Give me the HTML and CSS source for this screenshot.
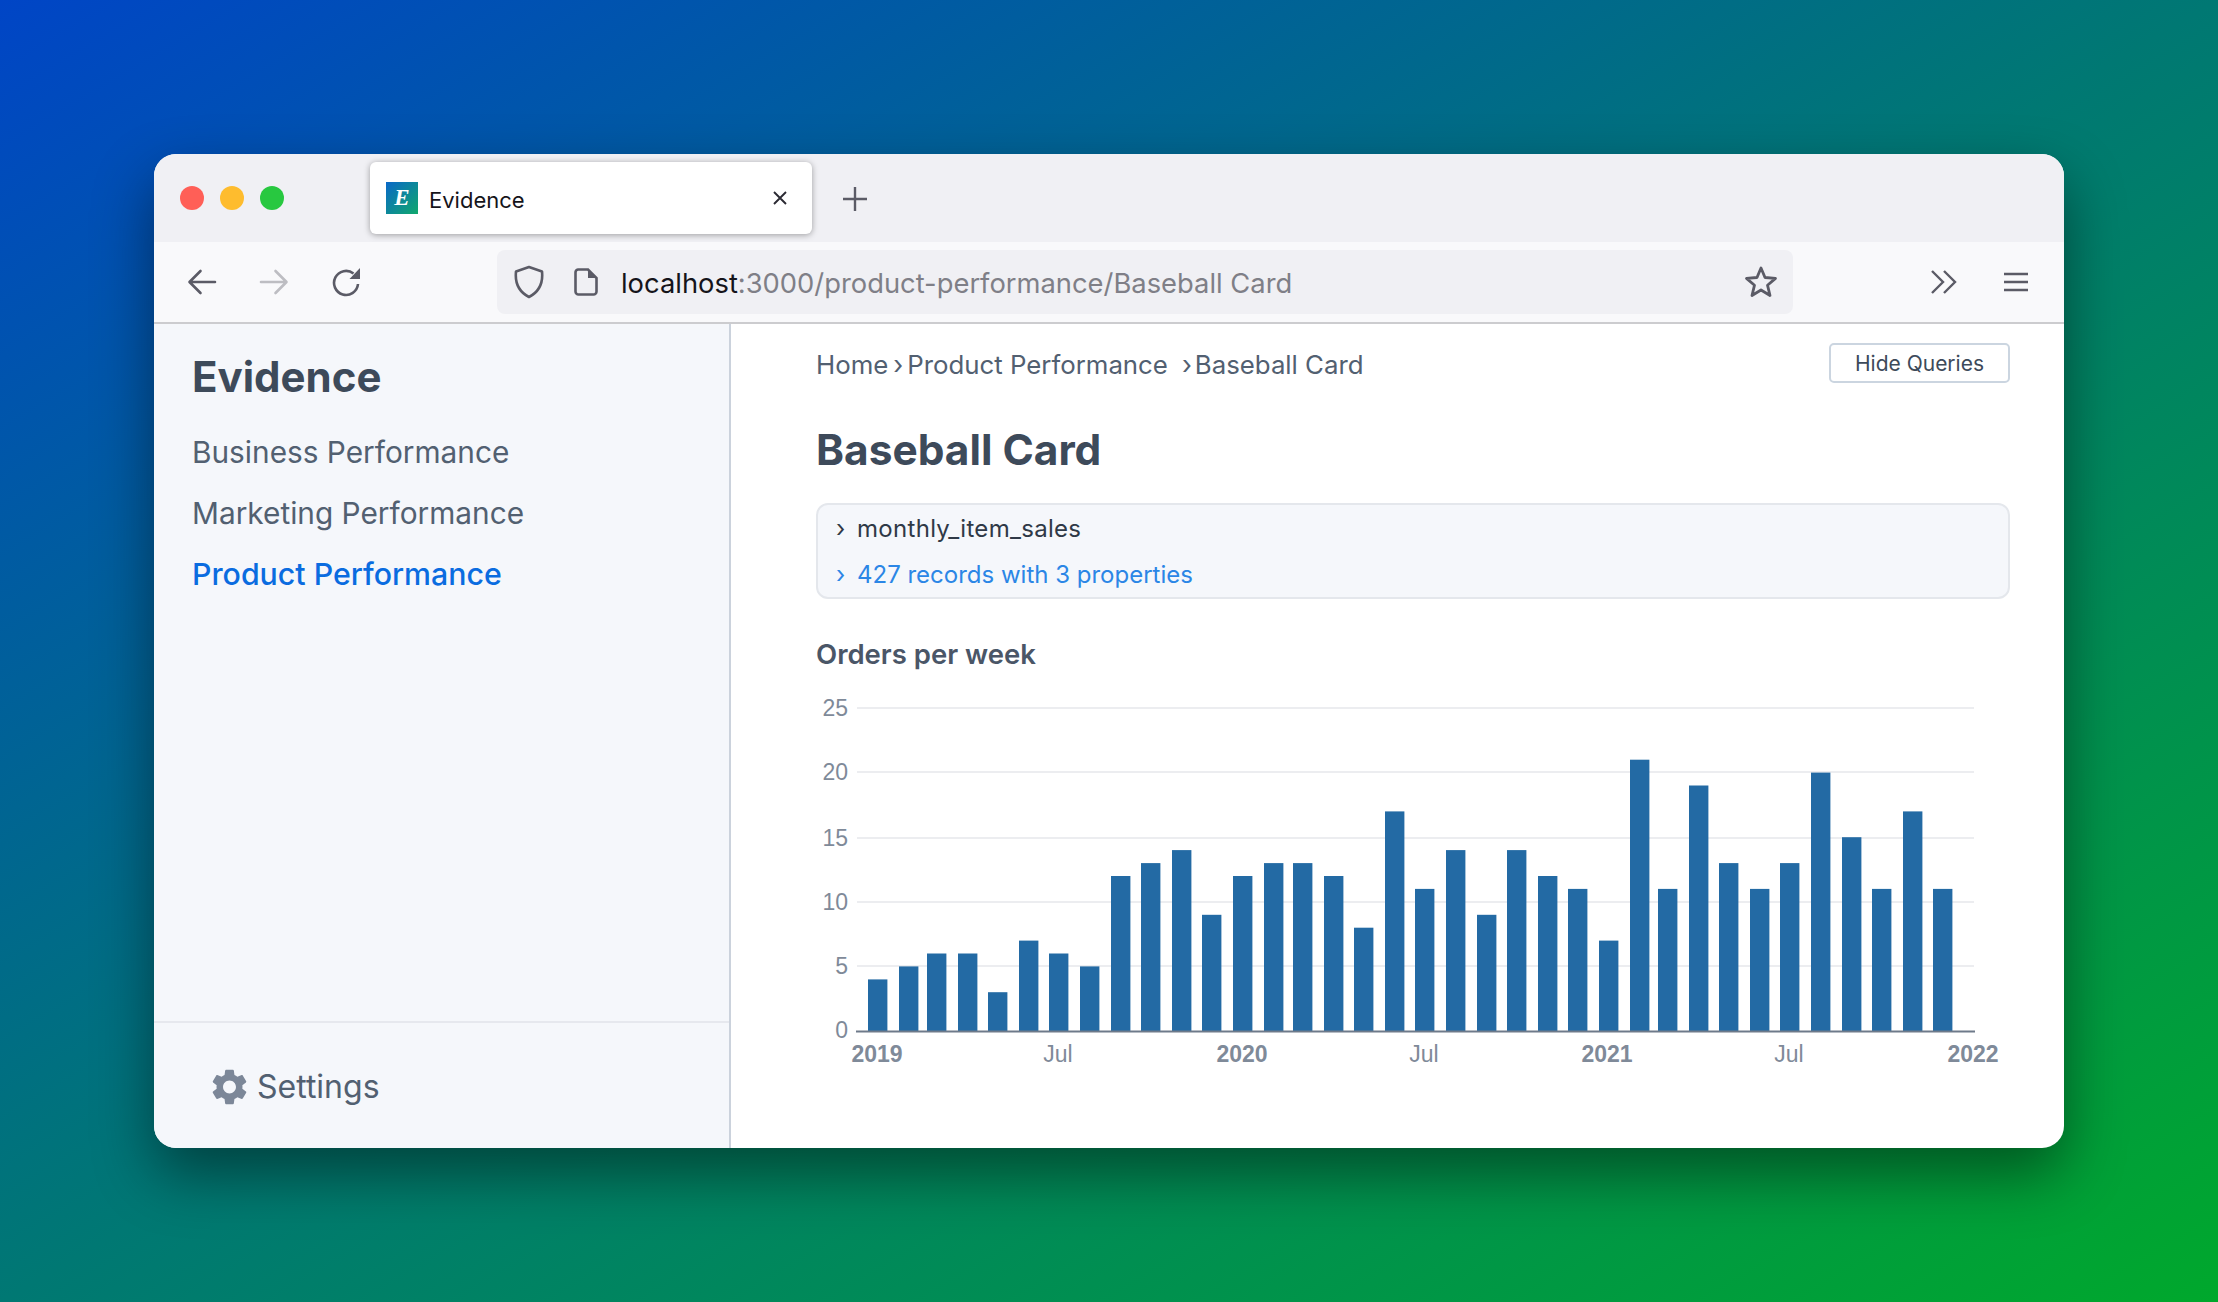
FILE: index.html
```html
<!DOCTYPE html>
<html>
<head>
    <meta charset="utf-8">
    <title>Evidence</title>
    <link rel="stylesheet" href="styles.css">
</head>
<body>
<div class="window">
    <div class="tab-strip">
        <div class="lights">
            <span class="light red"></span>
            <span class="light yellow"></span>
            <span class="light green"></span>
        </div>
        <div class="tab">
            <span class="favicon">E</span>
            <span class="tab-title">Evidence</span>
            <svg class="tab-close" width="16" height="16" viewBox="0 0 16 16"><path d="M2 2l12 12M14 2L2 14" stroke="#2b2a33" stroke-width="1.9" fill="none"/></svg>
        </div>
        <svg class="new-tab" width="26" height="26" viewBox="0 0 26 26"><path d="M13 1v24M1 13h24" stroke="#5b5b66" stroke-width="2.4" fill="none"/></svg>
    </div>
    <div class="toolbar">
        <div class="nav-buttons">
            <svg width="30" height="26" viewBox="0 0 30 26"><path d="M28 13H3M13.500 2L2.500 13l11 11" stroke="#5b5b66" stroke-width="2.600" stroke-linecap="round" stroke-linejoin="round" fill="none"/></svg>
            <svg width="30" height="26" viewBox="0 0 30 26"><path d="M2 13h25M16.500 2l11 11-11 11" stroke="#bdbdc2" stroke-width="2.600" stroke-linecap="round" stroke-linejoin="round" fill="none"/></svg>
            <svg class="reload" width="30" height="30" viewBox="0 0 30 30"><path d="M26 17a12 12 0 1 1-4.500-10.500" stroke="#5b5b66" stroke-width="2.600" fill="none"/><path d="M28 1v11H17.500z" fill="#5b5b66"/></svg>
        </div>
        <div class="url-bar">
            <svg width="32" height="34" viewBox="0 0 32 34"><path d="M16 2l13 4.500c1 9.500-1.500 19.500-13 25.500C4.500 26 2 16 3 6.500z" stroke="#5b5b66" stroke-width="2.600" fill="none" stroke-linejoin="round"/></svg>
            <svg class="doc-icon" width="24" height="28" viewBox="0 0 24 28"><path d="M4 1.500h10l8.500 8.500v13.500a3 3 0 0 1-3 3H4.500a3 3 0 0 1-3-3V4.500a3 3 0 0 1 2.500-3z" stroke="#5b5b66" stroke-width="2.600" fill="none"/><path d="M14 1.500l8.500 8.500H14z" fill="#5b5b66"/></svg>
            <span class="url"><span class="url-host">localhost</span>:3000/product-performance/Baseball Card</span>
            <svg class="star" width="34" height="34" viewBox="0 0 34 34"><path d="M17 3l4 9.500 10.500.9-8 6.800 2.500 10.300-9-5.500-9 5.500 2.500-10.300-8-6.800L13 12.500z" stroke="#5b5b66" stroke-width="2.800" fill="none" stroke-linejoin="round"/></svg>
        </div>
        <div class="tool-buttons">
            <svg width="28" height="26" viewBox="0 0 28 26"><path d="M2 2l11 11L2 24M14 2l11 11-11 11" stroke="#5b5b66" stroke-width="2.400" fill="none"/></svg>
            <svg width="24" height="20" viewBox="0 0 24 20"><path d="M0 2h24M0 10h24M0 18h24" stroke="#5b5b66" stroke-width="2.400" fill="none"/></svg>
        </div>
    </div>
    <div class="app">
        <aside class="sidebar">
            <div class="sidebar-top">
                <div class="brand">Evidence</div>
                <nav class="side-nav">
                    <a>Business Performance</a>
                    <a>Marketing Performance</a>
                    <a class="active">Product Performance</a>
                </nav>
            </div>
            <div class="sidebar-footer">
                <svg width="35" height="36" viewBox="2.500 2 19 20"><path fill="#7c8798" d="M19.140 12.940c.04-.3.06-.61.06-.94 0-.32-.02-.64-.07-.94l2.030-1.580c.18-.14.23-.41.12-.61l-1.920-3.320c-.12-.22-.37-.29-.59-.22l-2.390.96c-.5-.38-1.030-.7-1.620-.94l-.36-2.540c-.04-.24-.24-.41-.48-.41h-3.840c-.24 0-.43.17-.47.41l-.36 2.540c-.59.24-1.130.57-1.620.94l-2.390-.96c-.22-.08-.47 0-.59.22L2.740 8.870c-.12.21-.08.47.12.61l2.030 1.580c-.05.3-.09.63-.09.94s.02.64.07.94l-2.030 1.580c-.18.14-.23.41-.12.61l1.920 3.320c.12.22.37.29.59.22l2.390-.96c.5.38 1.030.7 1.620.94l.36 2.540c.05.24.24.41.48.41h3.840c.24 0 .44-.17.47-.41l.36-2.540c.59-.24 1.130-.56 1.620-.94l2.390.96c.22.08.47 0 .59-.22l1.920-3.320c.12-.22.07-.47-.12-.61l-2.010-1.580zM12 15.600c-1.980 0-3.600-1.620-3.600-3.600s1.620-3.600 3.600-3.600 3.600 1.620 3.600 3.600-1.620 3.600-3.600 3.600z"/></svg>
                <span>Settings</span>
            </div>
        </aside>
        <main class="content">
            <div class="top-row">
                <div class="breadcrumbs">
                    <a>Home</a><span class="sep">›</span><a>Product Performance</a><span class="sep wide">›</span><a>Baseball Card</a>
                </div>
                <button class="hide-queries">Hide Queries</button>
            </div>
            <h1>Baseball Card</h1>
            <div class="query-box">
                <div class="query-row"><span class="caret">›</span><span class="query-name">monthly_item_sales</span></div>
                <div class="query-row records"><span class="caret">›</span>427 records with 3 properties</div>
            </div>
            <h2>Orders per week</h2>
            <svg class="chart" width="1193" height="385" viewBox="817 690 1193 385">
                <g class="grid">
                    <path d="M857 708H1974M857 772H1974M857 838H1974M857 902H1974M857 966H1974"/>
                </g>
                <g class="bars">
                    <rect x="868" y="979.400" width="19.400" height="51.600"/>
                    <rect x="899" y="966.400" width="19.400" height="64.600"/>
                    <rect x="927" y="953.500" width="19.400" height="77.500"/>
                    <rect x="958" y="953.500" width="19.400" height="77.500"/>
                    <rect x="988" y="992.200" width="19.400" height="38.800"/>
                    <rect x="1019" y="940.600" width="19.400" height="90.400"/>
                    <rect x="1049" y="953.500" width="19.400" height="77.500"/>
                    <rect x="1080" y="966.400" width="19.400" height="64.600"/>
                    <rect x="1111" y="876" width="19.400" height="155"/>
                    <rect x="1141" y="863.100" width="19.400" height="167.900"/>
                    <rect x="1172" y="850.100" width="19.400" height="180.900"/>
                    <rect x="1202" y="914.800" width="19.400" height="116.200"/>
                    <rect x="1233" y="876" width="19.400" height="155"/>
                    <rect x="1264" y="863.100" width="19.400" height="167.900"/>
                    <rect x="1293" y="863.100" width="19.400" height="167.900"/>
                    <rect x="1324" y="876" width="19.400" height="155"/>
                    <rect x="1354" y="927.700" width="19.400" height="103.300"/>
                    <rect x="1385" y="811.400" width="19.400" height="219.600"/>
                    <rect x="1415" y="888.900" width="19.400" height="142.100"/>
                    <rect x="1446" y="850.100" width="19.400" height="180.900"/>
                    <rect x="1477" y="914.800" width="19.400" height="116.200"/>
                    <rect x="1507" y="850.100" width="19.400" height="180.900"/>
                    <rect x="1538" y="876" width="19.400" height="155"/>
                    <rect x="1568" y="888.900" width="19.400" height="142.100"/>
                    <rect x="1599" y="940.600" width="19.400" height="90.400"/>
                    <rect x="1630" y="759.700" width="19.400" height="271.300"/>
                    <rect x="1658" y="888.900" width="19.400" height="142.100"/>
                    <rect x="1689" y="785.500" width="19.400" height="245.500"/>
                    <rect x="1719" y="863.100" width="19.400" height="167.900"/>
                    <rect x="1750" y="888.900" width="19.400" height="142.100"/>
                    <rect x="1780" y="863.100" width="19.400" height="167.900"/>
                    <rect x="1811" y="772.600" width="19.400" height="258.400"/>
                    <rect x="1842" y="837.200" width="19.400" height="193.800"/>
                    <rect x="1872" y="888.900" width="19.400" height="142.100"/>
                    <rect x="1903" y="811.400" width="19.400" height="219.600"/>
                    <rect x="1933" y="888.900" width="19.400" height="142.100"/>
                </g>
                <path class="axis" d="M856 1031.500H1975"/>
                <g class="y-labels">
                    <text x="848" y="716">25</text>
                    <text x="848" y="780">20</text>
                    <text x="848" y="846">15</text>
                    <text x="848" y="910">10</text>
                    <text x="848" y="974">5</text>
                    <text x="848" y="1038">0</text>
                </g>
                <g class="x-labels">
                    <text class="year" x="877" y="1062">2019</text>
                    <text x="1058" y="1062">Jul</text>
                    <text class="year" x="1242" y="1062">2020</text>
                    <text x="1424" y="1062">Jul</text>
                    <text class="year" x="1607" y="1062">2021</text>
                    <text x="1789" y="1062">Jul</text>
                    <text class="year" x="1973" y="1062">2022</text>
                </g>
            </svg>
        </main>
    </div>
</div>
</body>
</html>
```

FILE: styles.css
```css
* {
    box-sizing: border-box;
}
html, body {
    margin: 0;
    height: 100%;
}
body {
    padding: 154px;
    background: linear-gradient(to bottom right, #0045c6, #007873 50%, #00a82c);
    font-family: Inter, "Liberation Sans", sans-serif;
    overflow: hidden;
}
.window {
    height: 994px;
    border-radius: 22px;
    overflow: hidden;
    display: flex;
    flex-direction: column;
    background: #ffffff;
    box-shadow: 0 26px 60px rgba(0, 0, 0, 0.45);
}

/* browser chrome */
.tab-strip {
    height: 88px;
    flex: none;
    background: #f0f0f4;
    display: flex;
    align-items: center;
    padding-left: 26px;
}
.lights {
    display: flex;
    gap: 16px;
    width: 190px;
}
.light {
    width: 24px;
    height: 24px;
    border-radius: 50%;
}
.red {
    background: #ff5f57;
}
.yellow {
    background: #febc2e;
}
.green {
    background: #28c840;
}
.tab {
    width: 442px;
    height: 72px;
    background: #ffffff;
    border-radius: 6px;
    box-shadow: 0 1px 6px rgba(0, 0, 0, 0.35);
    display: flex;
    align-items: center;
    padding: 0 24px 0 16px;
}
.favicon {
    width: 32px;
    height: 32px;
    background: linear-gradient(135deg, #0a68c8, #10a86c);
    color: #ffffff;
    font: italic bold 23px "Liberation Serif", serif;
    text-align: center;
    line-height: 32px;
}
.tab-title {
    margin: 4px 0 0 11px;
    font-size: 22px;
    color: #15141a;
}
.tab-close {
    margin-left: auto;
}
.new-tab {
    margin: 2px 0 0 30px;
}
.toolbar {
    height: 82px;
    flex: none;
    background: #f9f9fb;
    border-bottom: 2px solid #cccccf;
    display: flex;
    align-items: center;
    padding: 0 36px 0 33px;
}
.nav-buttons {
    display: flex;
    align-items: center;
    gap: 42px;
    width: 310px;
}
.reload {
    margin-left: 1px;
}
.url-bar {
    width: 1296px;
    height: 64px;
    background: #f0f0f4;
    border-radius: 8px;
    display: flex;
    align-items: center;
    padding: 0 15px 0 16px;
}
.doc-icon {
    margin-left: 29px;
}
.url {
    margin: 2px 0 0 23px;
    font-size: 27.350px;
    color: #7f7f87;
}
.url-host {
    color: #15141a;
}
.star {
    margin-left: auto;
}
.tool-buttons {
    display: flex;
    align-items: center;
    gap: 46px;
    margin-left: auto;
}

/* app */
.app {
    flex: 1;
    display: flex;
    min-height: 0;
}
.sidebar {
    width: 577px;
    flex: none;
    background: #f5f7fb;
    border-right: 2px solid #cbd2dc;
    display: flex;
    flex-direction: column;
    justify-content: space-between;
}
.sidebar-top {
    padding: 28px 38px;
}
.brand {
    font-size: 42px;
    font-weight: 700;
    color: #3d4a5a;
    line-height: 50px;
}
.side-nav {
    margin-top: 32px;
    display: flex;
    flex-direction: column;
    gap: 24px;
    font-size: 29.800px;
    line-height: 37px;
    color: #526071;
}
.side-nav .active {
    color: #0a6ce0;
    font-weight: 500;
    font-size: 30.300px;
}
.sidebar-footer {
    height: 127px;
    border-top: 2px solid #e6e8ee;
    padding: 2px 0 0 58px;
    display: flex;
    align-items: center;
    gap: 10px;
    font-size: 32px;
    color: #526071;
}
.content {
    flex: 1;
    padding: 19px 54px 0 85px;
}
.top-row {
    display: flex;
    justify-content: space-between;
    align-items: center;
}
.breadcrumbs {
    margin-top: 3px;
    font-size: 25.800px;
    color: #526071;
    display: flex;
}
.sep {
    margin: 0 4px 0 5px;
}
.sep.wide {
    margin: 0 3px 0 14px;
}
.hide-queries {
    width: 181px;
    height: 40px;
    padding: 0;
    background: #ffffff;
    border: 2px solid #cbd5e0;
    border-radius: 5px;
    font-family: inherit;
    font-size: 21px;
    color: #3d4a5a;
}
h1 {
    margin: 39px 0 0;
    font-size: 42.400px;
    font-weight: 700;
    line-height: 56px;
    color: #3d4a5a;
}
.query-box {
    margin-top: 25px;
    height: 96px;
    background: #f5f7fb;
    border: 2px solid #e4e7ec;
    border-radius: 12px;
    padding: 7px 18px;
    font-size: 24px;
    color: #2f3947;
}
.query-row {
    height: 34px;
    line-height: 34px;
    display: flex;
}
.query-name {
    letter-spacing: 0.300px;
}
.query-row.records {
    margin-top: 12px;
    color: #2b86e6;
}
.caret {
    width: 21px;
}
h2 {
    margin: 38px 0 0;
    font-size: 27.500px;
    font-weight: 600;
    line-height: 34px;
    color: #4a5667;
}
.chart {
    display: block;
    margin: 19px 0 0 1px;
}
.grid path {
    stroke: #e6e7ec;
    stroke-width: 1.6;
    fill: none;
}
.bars rect {
    fill: #236aa4;
}
.axis {
    stroke: #6e7a8a;
    stroke-width: 2;
    fill: none;
}
.chart text {
    font-family: "Liberation Sans", sans-serif;
    font-size: 23px;
    fill: #7f8a99;
}
.y-labels text {
    text-anchor: end;
}
.x-labels text {
    text-anchor: middle;
}
.x-labels .year {
    font-weight: bold;
}
```
